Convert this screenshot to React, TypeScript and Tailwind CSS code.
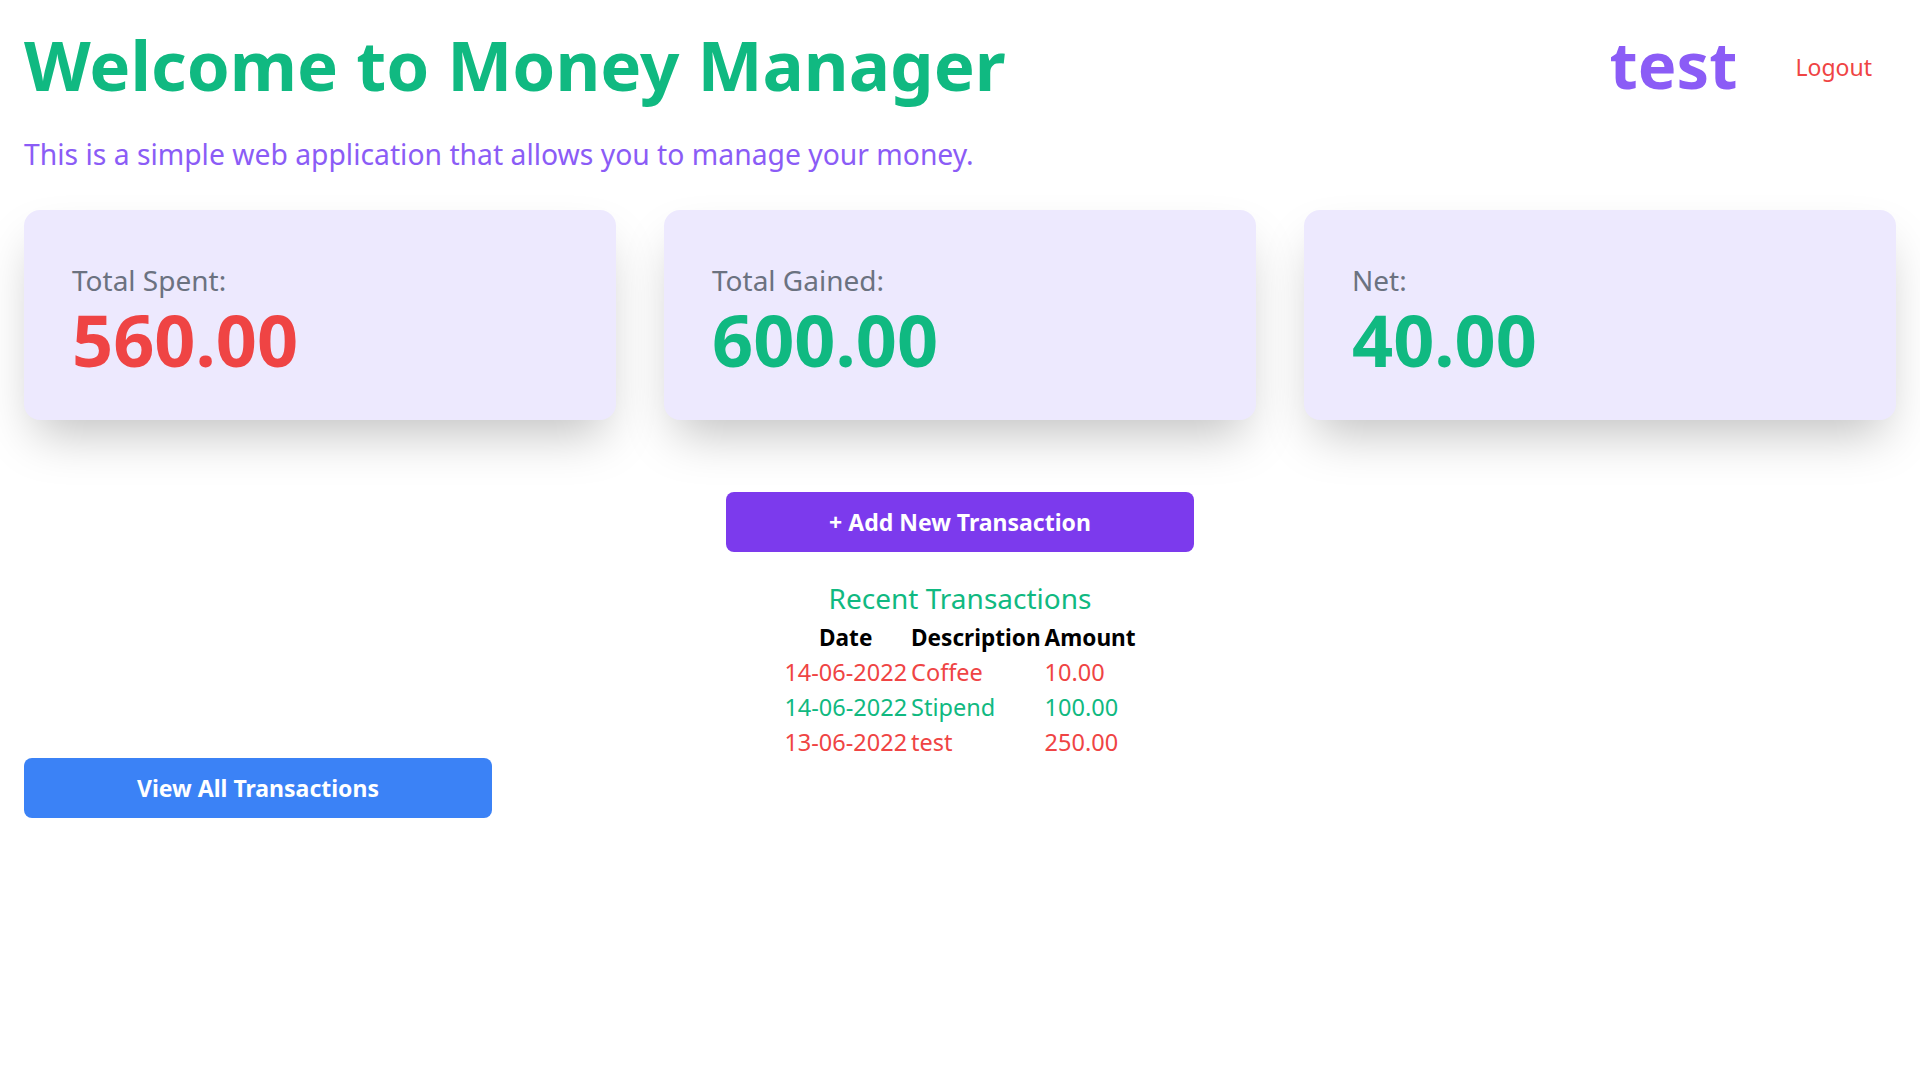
import React from "react";

const rows = [
  { date: "14-06-2022", desc: "Coffee", amount: "10.00", color: "text-[#ef4444]" },
  { date: "14-06-2022", desc: "Stipend", amount: "100.00", color: "text-[#10b981]" },
  { date: "13-06-2022", desc: "test", amount: "250.00", color: "text-[#ef4444]" },
];

function StatCard({ label, value, color }: { label: string; value: string; color: string }) {
  return (
    <div className="bg-[#ede9fe] rounded-2xl shadow-2xl px-12 pt-[52px] pb-[45px]">
      <div className="text-[28px] leading-[36px] text-[#6b7280]">{label}</div>
      <div className={`mt-[5px] text-7xl leading-none font-bold ${color}`}>{value}</div>
    </div>
  );
}

export default function App() {
  return (
    <div className="min-h-screen bg-white px-6 font-['Noto_Sans','Open_Sans',sans-serif]">
      <header className="flex items-center justify-between pt-[30px]">
        <h1 className="text-[69px] leading-none font-bold text-[#10b981]">Welcome to Money Manager</h1>
        <div className="flex items-center">
          <span className="text-[65px] leading-none font-bold text-[#8b5cf6]">test</span>
          <button className="ml-[58px] mr-6 mt-[5px] text-[23px] leading-8 text-[#ef4444]">Logout</button>
        </div>
      </header>
      <p className="mt-[37px] text-[28.3px] leading-[36px] text-[#8b5cf6]">
        This is a simple web application that allows you to manage your money.
      </p>
      <div className="mt-[38px] grid grid-cols-3 gap-12">
        <StatCard label="Total Spent:" value="560.00" color="text-[#ef4444]" />
        <StatCard label="Total Gained:" value="600.00" color="text-[#10b981]" />
        <StatCard label="Net:" value="40.00" color="text-[#10b981]" />
      </div>
      <button className="mx-auto mt-[72px] block w-1/4 rounded-lg bg-[#7c3aed] py-[14px] text-[23px] leading-8 font-bold text-white">
        + Add New Transaction
      </button>
      <h2 className="mt-[28px] text-center text-[28px] leading-[36px] text-[#10b981]">Recent Transactions</h2>
      <table className="mx-auto mt-[5px]">
        <thead>
          <tr className="text-[22.6px] leading-[34px] font-bold text-black">
            <th className="px-[2px] text-center">Date</th>
            <th className="px-[2px] text-center">Description</th>
            <th className="px-[2px] text-center">Amount</th>
          </tr>
        </thead>
        <tbody>
          {rows.map((r, i) => (
            <tr key={i} className={`text-[23.5px] leading-[35px] ${r.color}`}>
              <td className="px-[2px] text-left">{r.date}</td>
              <td className="px-[2px] text-left">{r.desc}</td>
              <td className="px-[2px] text-left">{r.amount}</td>
            </tr>
          ))}
        </tbody>
      </table>
      <button className="-mt-[2px] block w-1/4 rounded-lg bg-[#3b82f6] py-[14px] text-[23px] leading-8 font-bold text-white">
        View All Transactions
      </button>
    </div>
  );
}
